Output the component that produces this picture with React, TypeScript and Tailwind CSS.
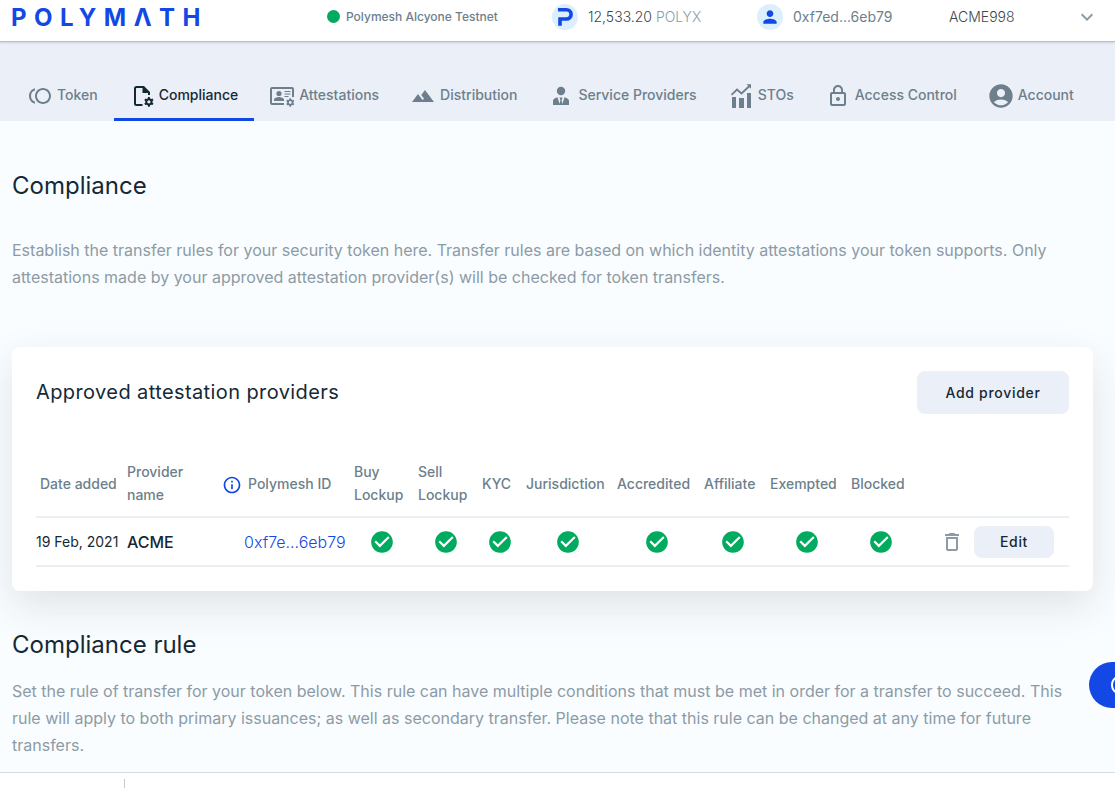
import type { ReactNode } from "react";
import {
  MdAccountCircle,
  MdCheckCircle,
  MdDeleteOutline,
  MdHelpOutline,
  MdInfoOutline,
  MdKeyboardArrowDown,
  MdLandscape,
  MdLockOutline,
  MdPerson,
  MdToll,
} from "react-icons/md";

const GEAR =
  "M4.2 0h1.6l.3 1.3 1 .6L8.400 1.500l.8 1.400-.9 1 0 1.200.9 1-.8 1.400-1.300-.4-1 .6L5.800 9H4.200l-.3-1.300-1-.6-1.300.4-.8-1.400.9-1V3.900l-.9-1 .8-1.400 1.300.4 1-.6z M5 3a1.500 1.500 0 1 0 0 3a1.500 1.500 0 1 0 0-3z";

function ComplianceIcon() {
  return (
    <svg width="24" height="24" viewBox="0 0 24 24" fill="none" aria-hidden="true">
      <path d="M12.500 21H6.500a1.500 1.500 0 0 1-1.500-1.500v-15A1.500 1.500 0 0 1 6.500 3H13" stroke="currentColor" strokeWidth="2" />
      <path d="M12.500 2H14l6 6v3h-2V9h-5.500z" fill="currentColor" />
      <path transform="translate(13.500 13) scale(1.080)" d={GEAR} fill="currentColor" fillRule="evenodd" />
    </svg>
  );
}

function AttestationsIcon() {
  return (
    <svg width="24" height="24" viewBox="0 0 24 24" fill="none" aria-hidden="true">
      <path d="M14 20H2a1 1 0 0 1-1-1V5a1 1 0 0 1 1-1h20a1 1 0 0 1 1 1v8" stroke="currentColor" strokeWidth="2" />
      <circle cx="9" cy="9.500" r="2.600" fill="currentColor" />
      <path d="M4 17v-1.300c0-1.800 3.300-2.700 5-2.700s5 .9 5 2.700V17z" fill="currentColor" />
      <path d="M14.500 7.500h6M14.500 10h6M14.500 12.500h4" stroke="currentColor" strokeWidth="1.200" />
      <path transform="translate(15.500 14.200) scale(.95)" d={GEAR} fill="currentColor" fillRule="evenodd" />
    </svg>
  );
}

function ServiceIcon() {
  return (
    <svg width="24" height="24" viewBox="0 0 24 24" fill="currentColor" aria-hidden="true">
      <circle cx="12" cy="7" r="4.200" />
      <path d="M4 21v-4c0-2 1.600-2.800 4.500-3.800L10.600 20l.8-3.800-.9-2.700h3l-.9 2.700.8 3.800 2.100-6.800c2.900 1 4.500 1.800 4.500 3.800v4z" />
    </svg>
  );
}

function StoIcon() {
  return (
    <svg width="24" height="24" viewBox="0 0 24 24" fill="none" aria-hidden="true">
      <path d="M3 13h4v11H3zM10 14h5v10h-5zM18 9h4v15h-4z" fill="currentColor" />
      <path d="M2.500 10.800L8 5.500l4.500 4L21 1.500" stroke="currentColor" strokeWidth="1.800" />
      <path d="M17.500.2H22v4.500z" fill="currentColor" />
    </svg>
  );
}

const navItems: { label: string; icon: ReactNode; active?: boolean }[] = [
  { label: "Token", icon: <MdToll size={24} /> },
  { label: "Compliance", icon: <ComplianceIcon />, active: true },
  { label: "Attestations", icon: <AttestationsIcon /> },
  { label: "Distribution", icon: <MdLandscape size={24} /> },
  { label: "Service Providers", icon: <ServiceIcon /> },
  { label: "STOs", icon: <StoIcon /> },
  { label: "Access Control", icon: <MdLockOutline size={24} /> },
  { label: "Account", icon: <MdAccountCircle size={28} className="-m-0.5" /> },
];

const checks = [
  { label: "Buy Lockup", width: "w-16" },
  { label: "Sell Lockup", width: "w-16" },
  { label: "KYC", width: "w-11" },
  { label: "Jurisdiction", width: "w-[91px]" },
  { label: "Accredited", width: "w-[87px]" },
  { label: "Affiliate", width: "w-[66px]" },
  { label: "Exempted", width: "w-[81px]" },
  { label: "Blocked", width: "w-[68px]" },
];

function Header() {
  return (
    <header className="relative z-10 flex h-[42px] items-center border-b border-[#b9c0cd] bg-white pb-2 pl-[11px] pr-4 shadow-[0_1px_2px_rgba(21,41,53,0.15)]">
      <a href="#home" aria-label="Polymath" className="pt-0.5 text-2xl leading-8 font-bold tracking-[0.31em] text-[#1348e4]">
        POLYMΛTH
      </a>
      <div className="ml-auto flex items-center">
        <div className="flex w-[225px] items-center gap-1.5 text-xs font-medium text-[#6d7f8c]">
          <span className="size-[13px] rounded-full bg-[#00aa5e]" />
          Polymesh Alcyone Testnet
        </div>
        <div className="flex w-[205px] items-center gap-2.5 text-sm font-light text-[#3b4650]">
          <svg width="26" height="26" viewBox="0 0 26 26" aria-hidden="true">
            <circle cx="13" cy="13" r="13" fill="#dcefff" />
            <path d="M6 5.800h8.500a4.300 4.300 0 0 1 0 9.200H8v6.800" stroke="#1348e4" strokeWidth="3.600" fill="none" />
          </svg>
          <span>
            12,533.20 <span className="text-[#8c9ba5]">POLYX</span>
          </span>
        </div>
        <div className="flex w-48 items-center gap-2.5 text-sm text-[#6d7f8c]">
          <span className="flex size-[26px] items-center justify-center rounded-full bg-[#dcefff] text-[#1348e4]">
            <MdPerson size={20} />
          </span>
          0xf7ed...6eb79
        </div>
        <button type="button" className="flex w-[150px] items-center justify-between text-sm font-light text-[#3b4650]">
          ACME998
          <MdKeyboardArrowDown size={24} className="text-[#8c9ba5]" />
        </button>
      </div>
    </header>
  );
}

export default function App() {
  return (
    <div className="flex min-h-screen flex-col overflow-x-hidden bg-[#fafdff] font-['Inter',sans-serif] text-[#152935]">
      <Header />
      <nav className="flex h-[79px] items-end bg-[#ebeff7] pl-3">
        {navItems.map((item) => (
          <a
            key={item.label}
            href={"#" + item.label.toLowerCase().replace(" ", "-")}
            aria-current={item.active ? "page" : undefined}
            className={
              "flex items-center gap-[5px] border-b-[3px] px-4 pb-2.5 text-sm font-medium whitespace-nowrap " +
              (item.active ? "border-[#1348e4] text-[#152935]" : "border-transparent text-[#6d7f8c]")
            }
          >
            <span className="shrink-0">{item.icon}</span>
            <span className="pb-0.5">{item.label}</span>
          </a>
        ))}
      </nav>

      <main className="pl-3 pr-[22px] pb-[13px]">
        <h1 className="mt-[49px] text-2xl leading-8">Compliance</h1>
        <p className="mt-[35px] text-base leading-[27px] text-[#8c9ba5]">
          Establish the transfer rules for your security token here. Transfer rules are based on which identity
          attestations your token supports. Only attestations made by your approved attestation provider(s) will be
          checked for token transfers.
        </p>

        <section className="mt-14 rounded-lg bg-white p-6 shadow-[0_15px_40px_rgba(21,41,53,0.12)]">
          <div className="flex items-start justify-between">
            <h2 className="pt-[7px] text-xl leading-7 tracking-[0.02em]">Approved attestation providers</h2>
            <button type="button" className="h-[43px] w-[152px] rounded-lg bg-[#ebeff7] text-sm font-medium tracking-wider">
              Add provider
            </button>
          </div>
          <table className="mt-[46px] w-full table-fixed border-collapse text-left text-sm">
            <thead>
              <tr className="border-b-2 border-[#ebeff3] leading-[23px] text-[#6d7f8c]">
                <th className="w-[87px] pb-2.5 pl-1 font-medium whitespace-nowrap">Date added</th>
                <th className="w-[97px] pr-6 pb-2.5 pl-1 font-medium">Provider name</th>
                <th className="w-[130px] pb-2.5 pl-0.5 font-medium">
                  <span className="flex items-center gap-1.5 whitespace-nowrap">
                    <MdInfoOutline size={20} className="mt-1 text-[#1348e4]" />
                    Polymesh ID
                  </span>
                </th>
                {checks.map((c) => (
                  <th key={c.label} className={c.width + " pb-2.5 pl-1 font-medium"}>
                    {c.label}
                  </th>
                ))}
                <th aria-label="Actions" />
              </tr>
            </thead>
            <tbody>
              <tr className="h-[49px] border-b-2 border-[#ebeff3]">
                <td className="whitespace-nowrap">19 Feb, 2021</td>
                <td className="pl-1 text-base font-medium">ACME</td>
                <td className="pl-6 text-base">
                  <a href="#identity" className="font-light text-[#1348e4]">0xf7e...6eb79</a>
                </td>
                {checks.map((c) => (
                  <td key={c.label}>
                    <MdCheckCircle size={26} title="Yes" className="mx-auto text-[#00aa5e]" />
                  </td>
                ))}
                <td>
                  <div className="flex items-center justify-end gap-2.5 pr-[15px]">
                    <button type="button" aria-label="Delete provider" className="text-[#8c9ba5]">
                      <MdDeleteOutline size={24} />
                    </button>
                    <button type="button" className="h-8 w-20 rounded-lg bg-[#ebeff7] text-sm font-medium tracking-wider">
                      Edit
                    </button>
                  </div>
                </td>
              </tr>
            </tbody>
          </table>
        </section>

        <h2 className="mt-[38px] text-2xl leading-8">Compliance rule</h2>
        <p className="mt-[17px] text-base leading-[27px] text-[#8c9ba5]">
          Set the rule of transfer for your token below. This rule can have multiple conditions that must be met in
          order for a transfer to succeed. This rule will apply to both primary issuances; as well as secondary
          transfer. Please note that this rule can be changed at any time for future transfers.
        </p>
      </main>

      <footer className="grow border-t border-[#d5dbe0] bg-white pt-1.5">
        <div className="ml-[124px] h-[9px] w-px bg-[#c4c9ce]" />
      </footer>

      <button
        type="button"
        aria-label="Help"
        className="fixed -right-10 bottom-20 flex h-[46px] w-[66px] items-center rounded-full bg-[#1348e4] pl-5 text-white"
      >
        <MdHelpOutline size={24} className="shrink-0" />
      </button>
    </div>
  );
}
